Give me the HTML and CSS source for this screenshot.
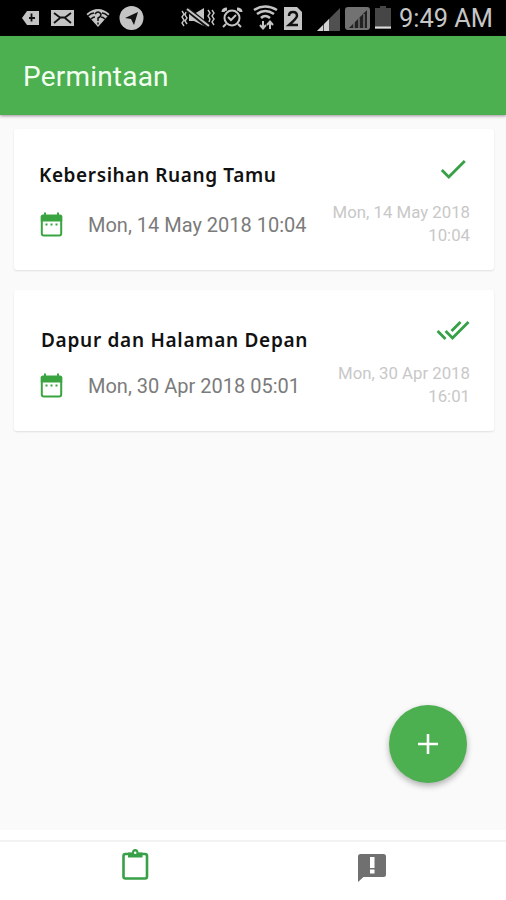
FILE: index.html
```html
<!DOCTYPE html>
<html lang="id">
<head>
<meta charset="utf-8">
<title>Permintaan</title>
<link rel="stylesheet" href="styles.css">
</head>
<body>
<div class="status-bar">
  <svg class="status-icons" viewBox="0 0 392 36">
    <g fill="#c4c4c4">
      <path d="M22 18l5-7h12v14H27z"/>
      <path d="M51 10h23v16H51z"/>
      <path d="M86.500 14q11.500-10 23 0L98 27z"/>
      <circle cx="131.500" cy="18" r="12"/>
      <path d="M189 14h5l10-6v18l-10-5h-5z"/>
      <path d="M284 7h13l5 5v18h-18z"/>
    </g>
    <g fill="none" stroke="#111" stroke-width="1.800">
      <path d="M31.500 13.500v8M29 18h6"/>
      <path d="M54 13l6 4.500h5l6-4.500M54 23l6-5M71 23l-6-5"/>
      <path d="M88 16q3-3 6-3M108 16q-3-3-6-3M91 19q2-2 4-2M105 19q-2-2-4-2M95 14q3-4 6 0 0 3-3 4v3M98 22.500v2" stroke-width="1.500"/>
      <path d="M289 16q0-4 4-4t4 4q0 2-8 9h9" stroke-width="2.500"/>
    </g>
    <path d="M125 18l13-6-4 13-3-6z" fill="#111"/>
    <path d="M187 9l21 17" stroke="#111" stroke-width="5"/>
    <g fill="none" stroke="#c4c4c4" stroke-width="2">
      <path d="M187 9l22 17"/>
      <path d="M182 11l2 3-2 3 2 3-2 3 2 3M186 12l-1 3 2 3-2 3 2 3M208 10l2 3-2 3 2 3-1 3M212 10l2 3-2 3 2 3-2 3 2 3" stroke-width="1.400"/>
      <circle cx="232" cy="18" r="7.500"/>
      <path d="M228 17l3 3 5-5M226 24l-3 3M238 24l3 3"/>
      <path d="M223 12q0-3 4-3M241 12q0-3-4-3" stroke-width="3"/>
      <path d="M254 10q11-7 23 0M257 14q8-6 17 0M261 18q4-4 9 0" stroke-width="2.600"/>
      <path d="M263 21v7M260 25l3 3.500 3-3.500M270 29v-7M267 25l3-3.500 3 3.500"/>
    </g>
    <path d="M317 31l23-23v23z" fill="#505050"/>
    <path d="M317 31l6-6v6zM324 31v-7l5-5v12z" fill="#d2d2d2"/>
    <rect x="345" y="7" width="25" height="23" rx="3" fill="#727272"/>
    <path d="M349 28l18-18v18z" fill="#222"/>
    <path d="M354 22v6M359 18v10M364 14v14" stroke="#727272" stroke-width="1.500"/>
    <path d="M375 8h5V6h6v2h5v21h-16z" fill="#464646"/>
    <path d="M375 27.500h16" stroke="#ddd" stroke-width="2"/>
  </svg>
  <span class="clock">9:49 AM</span>
</div>
<header class="app-bar"><h1>Permintaan</h1></header>
<main class="content">
  <article class="card">
    <div class="info">
      <h2 class="title-first">Kebersihan Ruang Tamu</h2>
      <div class="schedule">
        <svg class="calendar" viewBox="0 0 29 29"><path class="frame" d="M4.800 7h19.400v16.500a2 2 0 0 1-2 2H6.800a2 2 0 0 1-2-2z"/><path d="M3.800 6.500q0-2 2-2h17.400q2 0 2 2v5H3.800zM7 2.500h2v3H7zM20 2.500h2v3h-2zM8.500 13.500h2v2h-2zM13.500 13.500h2v2h-2zM18.500 13.500h2v2h-2z"/></svg>
        <span>Mon, 14 May 2018 10:04</span>
      </div>
    </div>
    <div class="meta">
      <svg class="check" viewBox="0 0 24 24"><path d="M9 16.170L4.830 12l-1.420 1.410L9 19 21 7l-1.410-1.410z"/></svg>
      <p>Mon, 14 May 2018<br>10:04</p>
    </div>
  </article>
  <article class="card">
    <div class="info">
      <h2 class="title-second">Dapur dan Halaman Depan</h2>
      <div class="schedule">
        <svg class="calendar" viewBox="0 0 29 29"><path class="frame" d="M4.800 7h19.400v16.500a2 2 0 0 1-2 2H6.800a2 2 0 0 1-2-2z"/><path d="M3.800 6.500q0-2 2-2h17.400q2 0 2 2v5H3.800zM7 2.500h2v3H7zM20 2.500h2v3h-2zM8.500 13.500h2v2h-2zM13.500 13.500h2v2h-2zM18.500 13.500h2v2h-2z"/></svg>
        <span>Mon, 30 Apr 2018 05:01</span>
      </div>
    </div>
    <div class="meta">
      <svg class="check" viewBox="0 0 24 24"><path d="M18 7l-1.410-1.410-6.340 6.340 1.410 1.410L18 7zm4.240-1.410L11.660 16.170 7.480 12l-1.410 1.410L11.660 19l12-12-1.420-1.410zM.41 13.410L6 19l1.410-1.410L1.830 12 .41 13.410z"/></svg>
      <p>Mon, 30 Apr 2018<br>16:01</p>
    </div>
  </article>
  <button class="fab" aria-label="Tambah">
    <svg viewBox="0 0 24 24"><path d="M12 2v20M2 12h20"/></svg>
  </button>
</main>
<nav class="tabs">
  <a class="tab active"><svg viewBox="0 0 34 34"><rect x="5.500" y="5" width="23.500" height="24.500" rx="2"/><path d="M10 3.500h4q0-3.500 3.200-3.500t3.300 3.500h4v5H10z"/><circle cx="17.200" cy="3.800" r="1.300"/></svg></a>
  <a class="tab feedback"><svg viewBox="0 0 34 34"><path d="M5.500 3h23q2.500 0 2.500 2.500v18q0 2.500-2.500 2.500H8.500L3 31V5.500Q3 3 5.500 3z"/><path class="mark" d="M15 6h4.500v11H15zM15 18.500h4.500v4H15z"/></svg></a>
</nav>
</body>
</html>
```
FILE: styles.css
```css
* { box-sizing: border-box; }
body {
  margin: 0;
  width: 506px;
  height: 900px;
  display: flex;
  flex-direction: column;
  overflow: hidden;
  background: #fff;
  font-family: Roboto, "Liberation Sans", sans-serif;
}
h1, h2, p { margin: 0; }
svg { display: block; flex: none; }
.status-bar {
  height: 36px;
  flex: none;
  display: flex;
  background: #000;
}
.status-icons { width: 392px; height: 36px; }
.clock {
  margin-left: 7px;
  color: #c6c6c6;
  font-size: 25.4px;
  line-height: 37px;
  white-space: nowrap;
}
.app-bar {
  height: 79px;
  flex: none;
  padding-left: 23px;
  background: #4caf50;
  box-shadow: 0 1px 3px rgba(70, 30, 60, .5);
  z-index: 1;
}
.app-bar h1 {
  color: #f2fff0;
  font-size: 28px;
  font-weight: 400;
  line-height: 81px;
  letter-spacing: .2px;
}
.content {
  position: relative;
  height: 715px;
  flex: none;
  padding: 14px 12px 0 14px;
  display: flex;
  flex-direction: column;
  gap: 20px;
  background: #fafafa;
}
.card {
  height: 141px;
  display: flex;
  justify-content: space-between;
  padding: 0 24px 0 23px;
  background: #fff;
  border-radius: 3px;
  box-shadow: 0 1px 2px rgba(0, 0, 0, .11);
}
.info { padding-top: 32px; }
.info h2 {
  height: 28px;
  margin-left: 2px;
  color: #111;
  font-family: "Noto Sans", sans-serif;
  font-size: 19px;
  font-weight: 600;
  line-height: 28px;
  white-space: nowrap;
}
.info .title-first { letter-spacing: .6px; }
.info .title-second { letter-spacing: .71px; margin: 4px 0 -4px 4px; }
.schedule {
  display: flex;
  align-items: center;
  height: 29px;
  margin-top: 21px;
  gap: 22px;
  color: #7b7b7b;
  font-size: 20px;
  white-space: nowrap;
}
.calendar { width: 29px; height: 29px; fill: #3aa540; }
.calendar .frame { fill: none; stroke: #3aa540; stroke-width: 2; }
.meta {
  padding-top: 23px;
  display: flex;
  flex-direction: column;
  align-items: flex-end;
}
.check { width: 34px; height: 34px; fill: #38a047; }
.meta p {
  margin-top: 15px;
  color: #c8c8c8;
  font-size: 16.8px;
  line-height: 23px;
  text-align: right;
  white-space: nowrap;
}
.fab {
  position: absolute;
  left: 389px;
  top: 590px;
  width: 78px;
  height: 78px;
  display: flex;
  align-items: center;
  justify-content: center;
  padding: 0;
  border: 0;
  border-radius: 50%;
  background: #4caf50;
  box-shadow: 0 3px 6px rgba(0, 0, 0, .3);
}
.fab svg { width: 24px; height: 24px; fill: none; stroke: #fff; stroke-width: 2.6; }
.tabs {
  height: 60px;
  flex: none;
  margin-top: 10px;
  padding: 7px 16px 0;
  display: flex;
  border-top: 2px solid #f2f2f2;
}
.tab { flex: 1; display: flex; justify-content: center; }
.tab svg { width: 34px; height: 34px; }
.active rect { fill: none; stroke: #38a047; stroke-width: 2.6; }
.active path { fill: #38a047; }
.active circle { fill: #fff; }
.feedback svg { margin-top: 2px; fill: #707070; }
.feedback .mark { fill: #fff; }
```
